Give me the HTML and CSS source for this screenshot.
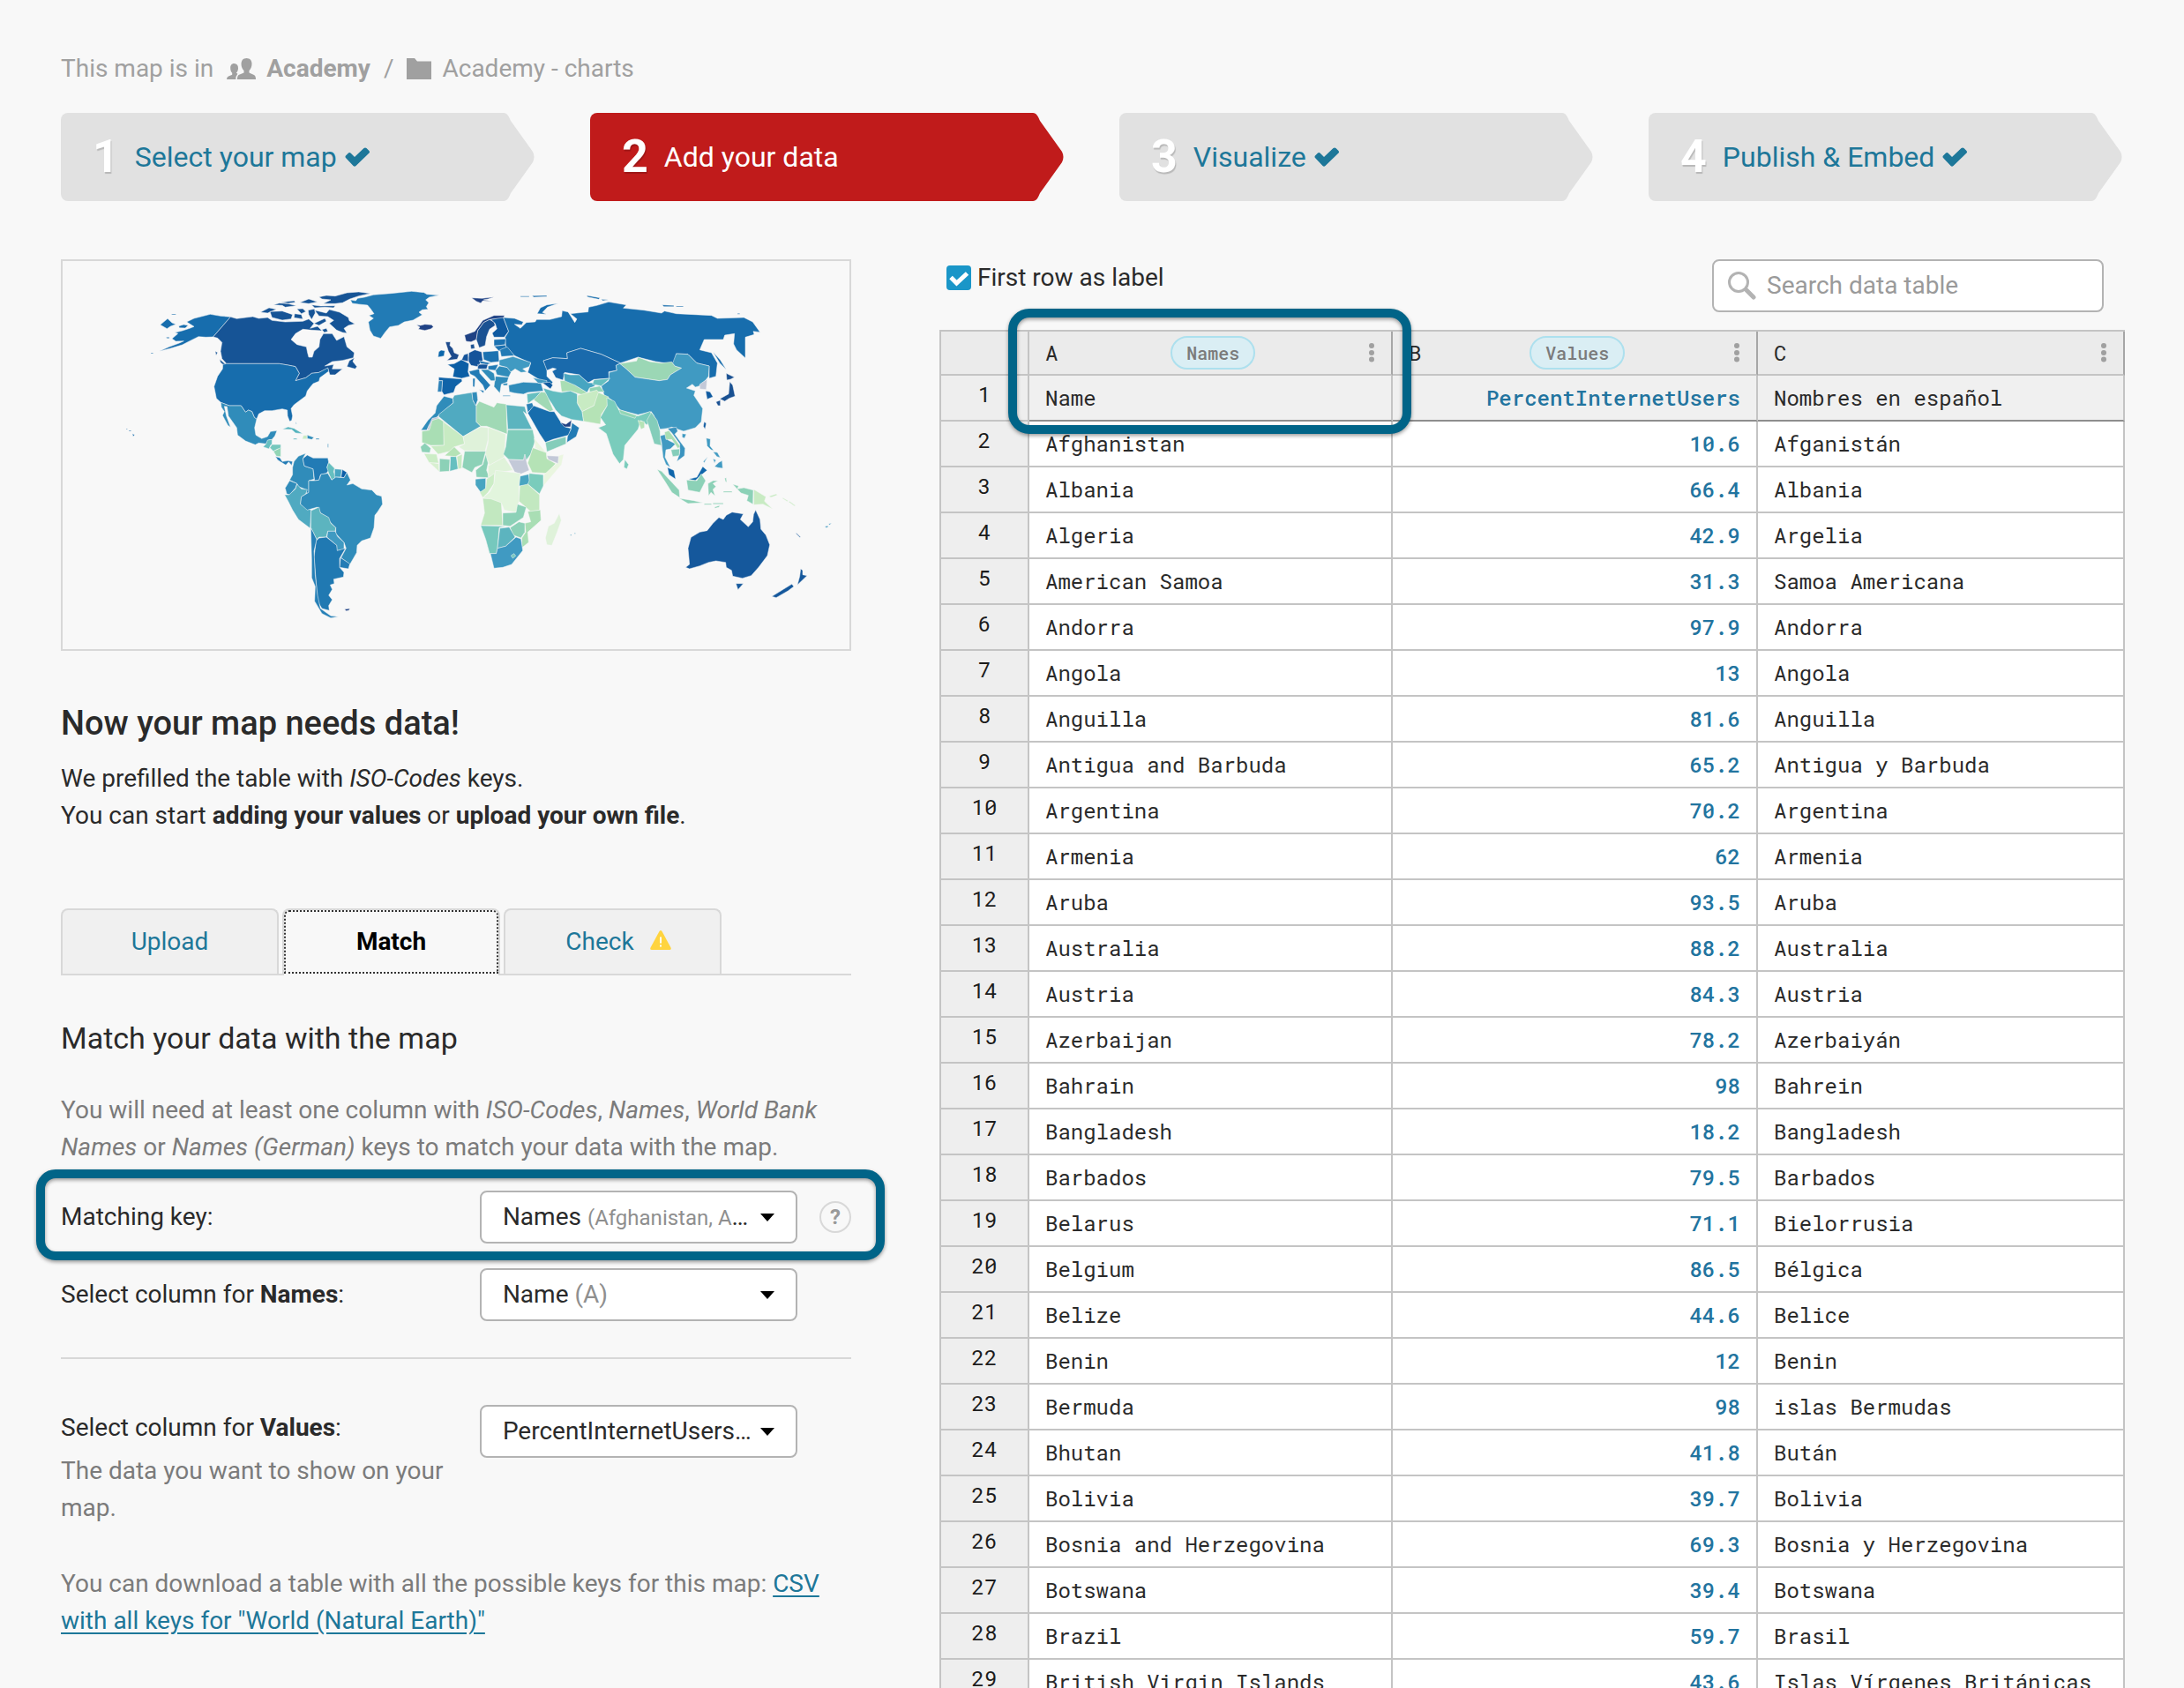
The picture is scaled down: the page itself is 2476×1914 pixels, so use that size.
FILE: index.html
```html
<!DOCTYPE html>
<html lang="en">
<head>
<meta charset="utf-8">
<meta name="viewport" content="width=device-width, initial-scale=1">
<title>Add your data</title>
<link rel="stylesheet" href="styles.css">
</head>
<body>
<svg class="sprite" aria-hidden="true">
  <symbol id="tip" viewBox="0 0 36 100"><path fill="currentColor" d="M0 0C4 0 6 4 8 9L33 44Q36 50 33 56L8 91C6 96 4 100 0 100Z"/></symbol>
  <symbol id="check" viewBox="0 0 28 22"><path fill="currentColor" d="M1 9.500L4 6.500Q5.500 5.500 7 7L11 11L21.500 1Q23 0 24.500 1L27.500 4Q28.500 5.500 27.500 6.500L12.500 21Q11 22.300 9.500 21L1 12Q0 10.700 1 9.500Z"/></symbol>
  <symbol id="kebab" viewBox="0 0 8 22"><g fill="currentColor"><circle cx="4" cy="3" r="3"/><circle cx="4" cy="11" r="3"/><circle cx="4" cy="18.500" r="3"/></g></symbol>
  <symbol id="caret" viewBox="0 0 16 9"><path fill="currentColor" d="M0 0H16L8 9Z"/></symbol>
</svg>
<div class="page">
  <nav class="crumbs" aria-label="Location">
    <span>This map is in</span>
    <a class="crumb crumb-team" href="#team">
      <svg class="icon-team" viewBox="0 0 33 24" aria-hidden="true"><path fill="currentColor" d="M22.500 0C18.500 0 16.500 2.800 16.500 6.500C16.500 10 18 12.500 19.500 14V16.500L13.500 19Q12 20 11.800 24H33Q33 20 31 19L25.500 16.500V14C27 12.500 28.500 10 28.500 6.500C28.500 2.800 26.500 0 22.500 0Z"/><path fill="currentColor" d="M8.500 6C5.500 6 4.200 8.200 4.200 11.200C4.200 13.500 5 15.500 6.200 16.700V18.800L2 20.500Q0 21.300 0 24H10.300Q10.300 20 12 18.500L12.300 17.500L10.800 16.700C12 15.500 13 13.500 13 11.200C13 8.200 11.500 6 8.500 6Z"/></svg>
      <strong>Academy</strong>
    </a>
    <span>/</span>
    <a class="crumb" href="#folder">
      <svg class="icon-folder" viewBox="0 0 28 24" aria-hidden="true"><path fill="currentColor" d="M0 0H9L12 3.500H28V24H0Z"/></svg>
      <span>Academy - charts</span>
    </a>
  </nav>

  <nav class="steps" aria-label="Steps">
    <a class="step" href="#map"><span class="step-body"><b class="step-no">1</b><span>Select your map <svg class="icon-check"><use href="#check"/></svg></span></span><svg class="step-tip"><use href="#tip"/></svg></a>
    <a class="step step-active" href="#data" aria-current="step"><span class="step-body"><b class="step-no">2</b><span>Add your data</span></span><svg class="step-tip"><use href="#tip"/></svg></a>
    <a class="step" href="#visualize"><span class="step-body"><b class="step-no">3</b><span>Visualize <svg class="icon-check"><use href="#check"/></svg></span></span><svg class="step-tip"><use href="#tip"/></svg></a>
    <a class="step" href="#publish"><span class="step-body"><b class="step-no">4</b><span>Publish &amp; Embed <svg class="icon-check"><use href="#check"/></svg></span></span><svg class="step-tip"><use href="#tip"/></svg></a>
  </nav>

  <div class="columns">
    <main class="setup">
      <div class="map">
        <svg viewBox="33 33 2676 1320" role="img" aria-label="World map of internet users">
          <g class="countries">
            <!-- Americas -->
            <path fill="#227bb5" d="M1012 165L1030 168 1036 160 1060 156 1090 148 1150 143 1220 136 1262 140 1272 146 1314 149 1280 156 1268 165 1278 175 1270 188 1276 197 1256 199 1245 207 1256 216 1225 234 1195 240 1175 252 1145 257 1130 275 1115 296 1090 288 1078 268 1073 240 1090 228 1075 218 1092 212 1080 195 1070 183 1040 180 1018 177Z"/>
            <path fill="#176dad" d="M604 223L545 291 520 292 495 290 465 305 440 318 400 330 362 340 395 325 430 312 445 305 418 306 405 297 425 280 415 276 440 270 465 262 480 256 455 240 480 228 535 214 570 220ZM428 254L445 249 460 252 450 261 430 260ZM365 250L390 229 405 243 418 248 400 255 388 263ZM404 213h14v3h-14ZM386 292l10 0 0 4-9 0ZM333 345h8v3h-8Z"/>
            <path fill="#165496" d="M604 223L625 229 680 222 700 228 730 225 745 235 790 240 850 238 870 230 888 245 875 262 900 255 915 270 880 268 850 265 825 280 810 300 830 317 862 325 866 345 870 360 882 360 888 340 905 325 908 300 920 280 950 280 965 303 990 290 1000 325 1025 345 1022 362 985 371 950 375 925 390 955 385 950 400 985 400 960 420 942 420 935 398 905 412 880 415 860 430 825 440 838 415 825 392 800 387 770 382 590 382 575 365 570 340 575 310 560 295 545 291Z"/>
            <path fill="#165496" d="M1000 392L1008 372 1025 362 1020 375 1034 392 1028 400ZM738 205L780 203 815 215 810 230 780 234 745 225ZM706 207L735 192 760 197 730 210ZM905 155L930 150 960 152 1000 141 1040 138 1080 143 1040 152 1010 162 985 175 960 178 920 178 945 165 915 162ZM750 182L770 176 800 178 828 185 790 190 780 184ZM775 174L800 170 820 168 825 173 800 177ZM840 174L870 162 900 172 870 178ZM830 196L850 195 860 205 845 212ZM880 182L910 186 960 185 955 192 925 190 890 192ZM868 200L890 196 892 210 880 232 870 215ZM822 212L845 215 850 230 820 226ZM890 200L930 210 940 198 975 207 1005 225 1008 236 1027 247 1005 252 990 262 1000 278 985 276 965 268 940 245 955 235 935 222 905 220ZM888 245L925 228 930 238 905 252ZM915 266l15-4 5 10-12 4ZM567 367L592 388 585 390 570 378ZM552 340l8 4-5 10Z"/>
            <path fill="#176dad" d="M578 385L590 382 770 382 800 387 825 392 838 415 825 440 860 430 880 415 905 412 935 396 938 408 908 430 905 442 885 450 875 462 865 475 860 492 820 522 810 535 815 560 812 575 805 578 798 560 797 540 780 536 745 542 720 542 700 553 693 571 685 565 677 545 665 540 655 547 640 525 600 525 571 514 556 500 548 460 560 425 577 400ZM270 620l8 4-5 6ZM258 609h8v3h-8ZM249 603h4v3h-4Z"/>
            <path fill="#308cba" d="M571 514L600 525 640 525 655 547 665 540 677 545 685 565 693 571 686 600 690 625 710 637 730 630 740 613 762 610 755 628 745 640 733 642 725 655 700 652 688 658 655 645 628 625 625 600 597 560 592 528 583 527 590 560 604 598 595 592 577 558 583 545 573 530Z"/>
            <path fill="#66bfc0" d="M715 665L725 655 730 642 745 640 745 655 740 660 735 672Z"/>
            <path fill="#76c8bd" d="M738 668L745 657 775 657 775 672 765 672 750 680Z"/>
            <path fill="#92d5b5" d="M750 680L775 668 775 698 760 697Z"/>
            <path fill="#227bb5" d="M757 698L772 702 780 715 800 712 815 715 812 728 802 716 792 727 765 710Z"/>
            <path fill="#56b4be" d="M780 605L800 597 820 602 850 620 825 618 812 606ZM818 636h12v4h-12Z"/>
            <path fill="#c8ebc3" d="M852 626l12 0 0 12-16 0Z"/>
            <path fill="#308cba" d="M865 625L888 633 880 640 865 637ZM894 636h12v4h-12ZM826 580l3 8-4-2ZM934 655h3v12h-3Z"/>
            <path fill="#308cba" d="M815 735L820 715 835 697 860 687 850 705 855 730 885 740 888 775 870 780 870 822 862 822 860 810 835 800 830 790 805 778 815 760Z"/>
            <path fill="#227bb5" d="M850 705L865 693 885 703 935 703 938 718 932 735 938 745 930 755 910 760 905 778 890 780 885 740 855 730Z"/>
            <path fill="#66bfc0" d="M938 718L958 738 955 750 962 768 948 778 938 755 932 735Z"/>
            <path fill="#48a5c1" d="M958 740L982 742 980 768 958 768Z"/>
            <path fill="#0b5ea8" d="M984 742L1000 752 990 770 980 768Z"/>
            <path fill="#308cba" d="M805 780L830 790 825 805 805 828 795 825 790 805Z"/>
            <path fill="#50aac1" d="M830 792L845 808 865 810 860 825 845 835 842 860 865 875 878 880 875 942 835 912 815 880 800 850 788 828 803 828 825 808Z"/>
            <path fill="#308cba" d="M870 780L890 780 905 778 912 758 935 755 948 778 962 768 990 770 1000 752 1012 778 1000 795 1020 790 1050 808 1085 812 1100 828 1118 833 1121 860 1105 885 1095 898 1092 940 1080 975 1050 985 1035 1000 1033 1025 1010 1065 980 1042 997 1010 990 990 962 960 962 940 940 918 935 905 910 890 900 870 865 880 842 860 845 835 870 820Z"/>
            <path fill="#5cb4bf" d="M878 882L905 870 910 890 938 905 945 925 962 940 960 952 935 952 930 972 905 972 897 980 885 955 877 940Z"/>
            <path fill="#409ac2" d="M935 952L960 952 968 970 990 990 990 1015 965 1018 965 1000 932 972Z"/>
            <path fill="#227bb5" d="M978 1042L1010 1063 1005 1080 975 1075Z"/>
            <path fill="#2079b2" d="M905 975L930 972 965 1000 967 1018 995 1010 975 1045 975 1075 990 1092 988 1108 955 1115 957 1130 943 1135 950 1150 938 1170 950 1185 938 1205 940 1222 915 1215 900 1190 893 1100 888 1040 895 985Z"/>
            <path fill="#2680b7" d="M877 940L885 955 897 980 888 1020 892 1100 900 1170 910 1215 945 1240 971 1243 945 1247 915 1232 890 1190 892 1140 880 1110 880 1050Z"/>
            <path fill="#1f4285" d="M992 1217l18-2-3 6-10 2ZM1236 250L1250 252 1265 248 1288 250 1294 257 1285 264 1265 269 1243 265 1248 258Z"/>
          </g>
          <g class="countries" transform="translate(1200 0)">
            <!-- Europe -->
            <path fill="#1f4285" d="M224 158L260 160 300 155 280 162 265 165 295 170 262 168 255 176 240 170ZM200 285L235 272 262 235 300 218 336 218 332 228 300 230 285 232 265 242 245 270 240 300 222 308 205 306Z"/>
            <path fill="#1d4b8c" d="M135 308L152 308 150 320 160 330 165 345 181 352 175 367 140 371 155 358 145 340Z"/>
            <path fill="#0b66ab" d="M112 342L120 336 133 338 130 356 110 360Z"/>
            <path fill="#1a5192" d="M265 242L285 232 300 240 304 252 285 265 275 290 270 320 250 328 240 300 245 270ZM220 318L232 315 235 330 222 332Z"/>
            <path fill="#0f5aa0" d="M290 232L332 225 350 272 335 292 300 292 294 278 310 264 304 245Z"/>
            <path fill="#176dad" d="M332 225L370 228 400 240 395 250 370 248 390 262 410 242 440 240 445 232 490 232 530 222 532 202 552 206 575 242 582 230 560 212 600 208 620 206 622 190 650 184 690 172 750 182 740 193 810 200 870 210 880 203 920 212 1040 218 1060 228 1150 225 1180 240 1205 275 1182 272 1185 283 1155 292 1155 363 1125 335 1115 315 1118 280 1085 285 1080 300 1015 300 1000 335 1040 345 1060 380 1055 425 1032 432 1032 390 990 380 960 350 920 348 915 385 850 375 790 360 730 380 665 350 595 330 548 345 550 365 500 362 468 372 480 400 480 425 500 445 490 462 460 440 415 412 425 380 370 355 340 325 338 292 350 272ZM447 212L458 192 480 182 518 177 482 190 465 208 478 214ZM1045 342L1070 370 1090 402 1068 380ZM616 150l45 8-5 5-38-8ZM665 163l25 2-20 3ZM872 182l40 2 0 4-34 0ZM920 186h24v3h-24ZM390 152h30v3h-30ZM430 151l50-1 0 4-45 2ZM1128 211h8v3h-8Z"/>
            <path fill="#0b5ea5" d="M142 385L165 382 190 368 215 382 212 410 218 425 190 432 160 427 165 400Z"/>
            <path fill="#1063a8" d="M112 428L190 434 192 442 170 460 163 480 130 488 122 475 125 440 112 440Z"/>
            <path fill="#2a80b8" d="M112 440L125 440 122 478 108 478Z"/>
            <path fill="#15549a" d="M215 345L235 335 258 342 262 370 245 392 222 388 212 372ZM190 370L198 352 212 347 214 375 200 372ZM245 385L280 383 275 400 245 400Z"/>
            <path fill="#1b71b0" d="M262 342L315 338 318 375 290 378 265 368ZM300 300L340 298 338 318 300 322ZM300 322L338 318 345 332 318 340ZM250 372L290 380 278 385 255 382Z"/>
            <path fill="#227bb5" d="M320 335L345 325 370 355 325 358Z"/>
            <path fill="#409ac2" d="M318 370L365 358 425 378 420 392 398 400 412 410 392 412 372 400 355 412 345 395 318 388Z"/>
            <path fill="#227bb5" d="M215 408L250 400 252 415 288 455 270 475 262 455 235 425 220 418ZM228 432l8 0-2 30-6-2ZM250 470l16 4-2 8ZM280 390L315 385 305 405 280 402Z"/>
            <path fill="#308cba" d="M255 402L280 402 300 415 305 440 290 440ZM305 405L318 390 345 395 358 412 350 428 310 420ZM305 425L350 428 345 445 325 452 320 482 300 460ZM330 490h25v3h-25Z"/>
            <!-- Asia -->
            <path fill="#308cba" d="M350 455L375 450 400 445 460 448 468 475 415 480 400 486 370 482 352 478ZM330 450l16-2 0 8-14 0Z"/>
            <path fill="#409ac2" d="M432 430L480 440 480 450 450 448Z"/>
            <path fill="#0f5aa0" d="M465 447L490 445 500 455 492 468Z"/>
            <path fill="#1a6aac" d="M468 372L500 362 550 365 548 345 595 330 665 350 730 380 715 388 718 405 690 410 692 432 640 436 620 447 590 420 540 412 535 438 510 430 498 408 512 400 500 397 480 405Z"/>
            <path fill="#9bd7b5" d="M728 382L785 373 790 360 830 375 870 380 905 376 915 390 938 397 900 420 890 436 862 440 780 428 750 400Z"/>
            <path fill="#409ac2" d="M728 382L750 400 780 428 862 440 890 436 900 420 938 397 915 390 908 380 920 348 960 350 990 380 1032 390 1030 425 1020 438 998 458 985 462 975 452 955 465 985 475 980 490 1010 535 1005 580 985 600 945 612 905 598 890 602 865 605 850 570 835 545 790 556 730 540 700 505 675 490 665 458 690 440 692 412 718 405 715 388ZM940 620l14 2-6 14-8-4Z"/>
            <path fill="#c3c9d8" d="M1000 452L1025 435 1022 470 1000 468Z"/>
            <path fill="#0f5aa0" d="M1020 475L1035 478 1045 495 1025 503ZM1015 580L1022 585 1018 605 1012 595Z"/>
            <path fill="#1a5192" d="M1090 415L1118 428 1105 435 1092 438ZM1102 443L1112 455 1120 493 1100 500 1085 510 1068 502 1098 485ZM1055 512L1070 506 1070 525 1062 525Z"/>
            <path fill="#a9deb4" d="M525 440L555 440 575 455 617 480 605 490 560 475 530 478Z"/>
            <path fill="#48a5c1" d="M537 415L560 420 590 420 620 447 650 448 640 460 625 465 617 480 575 455 540 440Z"/>
            <path fill="#66bfc0" d="M640 437L695 432 665 458 635 452Z"/>
            <path fill="#92d5b5" d="M625 465L660 458 675 478 625 478Z"/>
            <path fill="#62bcc0" d="M468 465L500 475 530 480 560 475 583 485 585 520 600 545 605 578 565 572 530 560 510 540 495 515 480 495Z"/>
            <path fill="#a0d9b5" d="M435 505L460 478 475 480 485 500 502 540 490 545Z"/>
            <path fill="#66bfc0" d="M412 485L460 478 440 500 415 518Z"/>
            <path fill="#2a80b8" d="M410 520L430 515 435 528 415 548Z"/>
            <path fill="#176dad" d="M415 550L435 525 490 545 505 545 528 582 545 598 562 602 555 625 500 640 475 650 455 620Z"/>
            <path fill="#227bb5" d="M565 583L590 600 580 630 548 650 550 630 562 605Z"/>
            <path fill="#1f4285" d="M526 582L545 588 564 574 560 597 540 597Z"/>
            <path fill="#84cdba" d="M475 650L545 630 545 655 480 682Z"/>
            <path fill="#c8ebc3" d="M585 490L650 472 660 485 640 525 600 545 583 515Z"/>
            <path fill="#b5e3b6" d="M600 545L640 525 655 480 690 495 685 525 665 555 662 588 605 578Z"/>
            <path fill="#7accbc" d="M684 498L710 510 725 540 790 560 830 545 845 558 820 590 800 575 790 605 745 660 740 708 727 722 705 690 682 620 655 600 680 590 662 565 685 525Z"/>
            <path fill="#92d5b5" d="M725 538L785 558 780 568 730 552Z"/>
            <path fill="#b5e3b6" d="M790 575L812 580 812 600 800 605Z"/>
            <path fill="#7accbc" d="M745 708L758 725 752 740 742 735Z"/>
            <path fill="#84cdba" d="M835 548L855 575 865 612 866 640 878 700 868 660 845 655 828 600 820 575Z"/>
            <path fill="#409ac2" d="M865 628L885 622 892 642 918 655 900 672 885 675 882 700 900 735 885 725 875 700 870 650Z"/>
            <path fill="#a9deb4" d="M880 615L895 610 935 665 925 670 905 640 885 640Z"/>
            <path fill="#3a93bf" d="M890 602L920 598 925 612 915 622 950 670 948 695 922 715 932 685 932 655 905 618Z"/>
            <path fill="#84cdba" d="M902 675L932 672 930 695 908 698Z"/>
            <path fill="#0f66ab" d="M890 735L912 745 918 775 895 760ZM962 775L990 768 1010 732 1025 745 1000 765 985 780Z"/>
            <path fill="#8cd1b7" d="M955 778L990 780 1005 757 1020 780 1000 820 960 812ZM855 742L870 748 895 775 930 812 932 838 905 820 880 780ZM930 840L980 848 1010 855 960 858ZM1015 858h25v4h-25ZM1045 856h35v4h-35ZM1050 870l18-6-2 6-14 4ZM1028 790L1045 780 1062 780 1045 790 1055 800 1045 810 1052 832 1038 820 1030 832ZM1112 792L1132 798 1128 808 1150 804 1182 812 1181 860 1160 848 1165 830 1140 822ZM1085 772l5-2 2 16-5-4ZM1080 816h30v4h-30Z"/>
            <path fill="#c8ebc3" d="M1184 810L1225 835 1220 850 1247 876 1215 860 1184 862ZM1235 833l25-8 4 4-22 8ZM1282 838l18 10-2 3-16-10ZM1305 850l20 14-2 3-20-14Z"/>
            <path fill="#409ac2" d="M1022 635L1036 638 1035 662 1048 678 1038 675 1025 662ZM1045 682l15 2 10 18-12-4ZM1050 732L1065 718 1076 712 1078 738 1062 736ZM1012 715l15-16-12 20ZM1045 705l10 5-5 10Z"/>
            <!-- Oceania -->
            <path fill="#15589c" d="M970 973L1000 955 1025 950 1045 925 1065 905 1080 912 1090 898 1110 887 1148 893 1138 912 1165 937 1180 920 1183 895 1190 880 1205 912 1208 945 1225 965 1238 998 1230 1035 1200 1075 1175 1103 1145 1112 1112 1105 1108 1085 1090 1075 1088 1058 1055 1053 1030 1058 1000 1070 965 1080 952 1075 965 1065 960 1010ZM1123 1130L1148 1130 1130 1151ZM1343 1080L1350 1085 1350 1100 1365 1103 1332 1135 1340 1105ZM1313 1132L1320 1140 1300 1155 1260 1178 1245 1174ZM1328 958l15 14-3 1-12-12Z"/>
            <path fill="#409ac2" d="M1426 936l10-3 0 6-8 1ZM1438 927l10-2-6 6ZM573 958h4v3h-4ZM560 963h4v4h-4Z"/>
            <!-- Africa -->
            <path fill="#308cba" d="M105 525L130 493 160 500 162 515 115 555 80 590 72 608 52 608 75 575 100 550Z"/>
            <path fill="#c3c9d8" d="M72 608L80 590 90 568 112 563 110 572 92 576 80 608Z"/>
            <path fill="#50aac1" d="M112 555L162 515 160 500 165 490 225 480 230 510 240 525 240 580 255 595 195 630 112 562Z"/>
            <path fill="#308cba" d="M225 480L242 478 245 505 238 525 228 505Z"/>
            <path fill="#a0d9b5" d="M240 525L250 510 300 530 310 515 342 520 345 622 275 595 255 595 240 580Z"/>
            <path fill="#5cb4bf" d="M342 522L405 528 412 555 400 545 430 605 347 605Z"/>
            <path fill="#a9deb4" d="M55 612L80 608 90 575 112 568 130 580 130 660 85 660 70 655 55 650Z"/>
            <path fill="#c8ebc3" d="M128 580L195 630 200 655 165 665 150 680 110 690 85 662 130 660Z"/>
            <path fill="#dff2da" d="M195 630L255 597 280 600 280 640 270 680 200 678 180 665 200 655Z"/>
            <path fill="#e0f3da" d="M280 598L340 622 335 700 285 728 270 690 280 650Z"/>
            <path fill="#80cdbb" d="M347 607L432 607 440 645 425 690 410 710 350 708 332 690 340 665Z"/>
            <path fill="#eaf6e0" d="M437 635L480 688 440 668Z"/>
            <path fill="#c3c9d8" d="M348 708L400 710 405 690 412 720 420 745 390 758 370 750Z"/>
            <path fill="#b5e3b6" d="M432 668L478 685 480 705 510 722 480 755 430 752 415 720Z"/>
            <path fill="#eaf6e0" d="M520 695L537 690 530 725 468 798 470 760 512 722Z"/>
            <path fill="#c3c9d8" d="M480 695L520 697 518 722 485 708Z"/>
            <path fill="#7accbc" d="M420 755L468 760 468 798 455 825 415 792Z"/>
            <path fill="#48a5c1" d="M388 765L418 758 420 780 413 798 385 798Z"/>
            <path fill="#8cd1b7" d="M50 665L65 652 85 670 82 685 55 683Z"/>
            <path fill="#ccedc6" d="M62 688L105 690 112 720 80 720Z"/>
            <path fill="#d8f0d0" d="M80 718L112 722 114 750Z"/>
            <path fill="#8cd1b7" d="M115 705L150 708 148 748 115 750Z"/>
            <path fill="#66bfc0" d="M152 698L172 698 178 740 150 748Z"/>
            <path fill="#b5e3b6" d="M132 695L165 665 188 688 170 698Z"/>
            <path fill="#c8ebc3" d="M174 698L192 690 190 738 178 740Z"/>
            <path fill="#8cd1b7" d="M200 680L272 680 260 725 235 735 225 752 192 735Z"/>
            <path fill="#8cd1b7" d="M272 690L280 720 275 745 285 770 240 768 238 745 262 725Z"/>
            <path fill="#e0f3da" d="M280 730L335 700 365 745 330 750 280 768Z"/>
            <path fill="#48a5c1" d="M237 775L272 772 272 808 255 820 237 795Z"/>
            <path fill="#ccedc6" d="M252 820L272 806 275 775 302 755 300 790 280 820 262 838Z"/>
            <path fill="#e2f5dd" d="M305 745L390 755 385 800 385 850 375 888 335 880 325 855 262 838 285 820 300 790Z"/>
            <path fill="#c2e8c0" d="M388 798L415 792 455 828 455 880 425 885 385 850Z"/>
            <path fill="#c2e8c0" d="M262 840L290 842 325 855 330 932 255 932 268 890Z"/>
            <path fill="#8cd1b7" d="M330 890L375 888 380 860 410 870 400 905 355 935 330 932Z"/>
            <path fill="#a9deb4" d="M415 885L458 880 460 915 415 955 418 990 395 1008 395 975 408 955 405 925 425 920Z"/>
            <path fill="#8cd1b7" d="M355 940L385 920 405 925 405 955 392 975 365 965Z"/>
            <path fill="#76c8bd" d="M255 933L340 935 318 940 312 1010 308 1028 285 1028 272 980Z"/>
            <path fill="#5cb4bf" d="M320 942L352 938 372 972 340 1003 312 1010Z"/>
            <path fill="#409ac2" d="M288 1028L308 1028 312 1010 340 1003 375 972 392 978 398 1018 360 1065 330 1075 300 1078Z"/>
            <path fill="#76c8bd" d="M358 1035L368 1028 374 1036 364 1044Z"/>
            <path fill="#dff2da" d="M522 892L529 915 515 955 497 1000 480 998 475 975 485 935 505 925Z"/>
          </g>
        </svg>
      </div>

      <h1 class="title">Now your map needs data!</h1>
      <p class="intro">We prefilled the table with <em>ISO-Codes</em> keys.<br>You can start <strong>adding your values</strong> or <strong>upload your own file</strong>.</p>

      <div class="tabs" role="tablist">
        <button class="tab" type="button" role="tab" aria-selected="false">Upload</button>
        <button class="tab tab-active" type="button" role="tab" aria-selected="true">Match</button>
        <button class="tab tab-warn" type="button" role="tab" aria-selected="false">Check <svg class="icon-warn" viewBox="0 0 24 22" aria-hidden="true"><path fill="#ffd43f" d="M10.500 1Q12 -1 13.500 1L23.500 19.500Q24.500 22 22 22H2Q-.5 22 .5 19.500Z"/><path stroke="#fff" stroke-width="2" d="M12 7.500V14.500M12 16.500V18.500"/></svg></button>
      </div>

      <h2 class="subtitle">Match your data with the map</h2>
      <p class="note match-note">You will need at least one column with <em>ISO-Codes</em>, <em>Names</em>, <em>World Bank Names</em> or <em>Names (German)</em> keys to match your data with the map.</p>

      <div class="field field-marked">
        <label class="field-label" for="key">Matching key:</label>
        <div class="dropdown">
          <select id="key"><option>Names</option><option>ISO-Codes</option><option>World Bank Names</option></select>
          <span class="hint"><span class="hint-small">(Afghanistan, A</span>…</span>
          <svg class="icon-caret"><use href="#caret"/></svg>
        </div>
        <button class="help" type="button" aria-label="Help">?</button>
      </div>
      <div class="field">
        <label class="field-label" for="col-names">Select column for <strong>Names</strong>:</label>
        <div class="dropdown">
          <select id="col-names"><option>Name</option><option>PercentInternetUsers</option></select>
          <span class="hint"><span>(A)</span></span>
          <svg class="icon-caret"><use href="#caret"/></svg>
        </div>
      </div>
      <hr class="rule">
      <div class="field field-top">
        <div class="field-text">
          <label for="col-values">Select column for <strong>Values</strong>:</label>
          <p class="note">The data you want to show on your map.</p>
        </div>
        <div class="dropdown">
          <select id="col-values" class="grow"><option>PercentInternetUsers…</option><option>Name</option></select>
          <svg class="icon-caret"><use href="#caret"/></svg>
        </div>
      </div>
      <p class="note download">You can download a table with all the possible keys for this map: <a href="#csv">CSV with all keys for "World (Natural Earth)"</a></p>
    </main>

    <section class="data">
      <div class="toolbar">
        <label class="first-row"><input type="checkbox" checked> First row as label</label>
        <div class="search">
          <svg class="icon-search" viewBox="0 0 32 32" aria-hidden="true"><circle cx="12" cy="12" r="10.500" fill="none" stroke="#b3b3b3" stroke-width="3"/><path stroke="#b3b3b3" stroke-width="5" stroke-linecap="round" d="M21 21L29 29"/></svg>
          <input type="search" placeholder="Search data table" aria-label="Search data table">
        </div>
      </div>
      <div class="sheet">
        <table>
          <colgroup><col class="col-index"><col class="col-a"><col class="col-b"><col></colgroup>
          <thead>
            <tr>
              <th></th>
              <th><div class="head"><span>A</span><span class="badge">Names</span><button class="kebab" type="button" aria-label="Column A menu"><svg><use href="#kebab"/></svg></button></div></th>
              <th><div class="head"><span>B</span><span class="badge">Values</span><button class="kebab" type="button" aria-label="Column B menu"><svg><use href="#kebab"/></svg></button></div></th>
              <th><div class="head"><span>C</span><span></span><button class="kebab" type="button" aria-label="Column C menu"><svg><use href="#kebab"/></svg></button></div></th>
            </tr>
          </thead>
          <tbody>
            <tr class="label-row"><th>1</th><td>Name</td><td>PercentInternetUsers</td><td>Nombres en español</td></tr>
            <tr><th>2</th><td>Afghanistan</td><td>10.6</td><td>Afganistán</td></tr>
            <tr><th>3</th><td>Albania</td><td>66.4</td><td>Albania</td></tr>
            <tr><th>4</th><td>Algeria</td><td>42.9</td><td>Argelia</td></tr>
            <tr><th>5</th><td>American Samoa</td><td>31.3</td><td>Samoa Americana</td></tr>
            <tr><th>6</th><td>Andorra</td><td>97.9</td><td>Andorra</td></tr>
            <tr><th>7</th><td>Angola</td><td>13</td><td>Angola</td></tr>
            <tr><th>8</th><td>Anguilla</td><td>81.6</td><td>Anguilla</td></tr>
            <tr><th>9</th><td>Antigua and Barbuda</td><td>65.2</td><td>Antigua y Barbuda</td></tr>
            <tr><th>10</th><td>Argentina</td><td>70.2</td><td>Argentina</td></tr>
            <tr><th>11</th><td>Armenia</td><td>62</td><td>Armenia</td></tr>
            <tr><th>12</th><td>Aruba</td><td>93.5</td><td>Aruba</td></tr>
            <tr><th>13</th><td>Australia</td><td>88.2</td><td>Australia</td></tr>
            <tr><th>14</th><td>Austria</td><td>84.3</td><td>Austria</td></tr>
            <tr><th>15</th><td>Azerbaijan</td><td>78.2</td><td>Azerbaiyán</td></tr>
            <tr><th>16</th><td>Bahrain</td><td>98</td><td>Bahrein</td></tr>
            <tr><th>17</th><td>Bangladesh</td><td>18.2</td><td>Bangladesh</td></tr>
            <tr><th>18</th><td>Barbados</td><td>79.5</td><td>Barbados</td></tr>
            <tr><th>19</th><td>Belarus</td><td>71.1</td><td>Bielorrusia</td></tr>
            <tr><th>20</th><td>Belgium</td><td>86.5</td><td>Bélgica</td></tr>
            <tr><th>21</th><td>Belize</td><td>44.6</td><td>Belice</td></tr>
            <tr><th>22</th><td>Benin</td><td>12</td><td>Benin</td></tr>
            <tr><th>23</th><td>Bermuda</td><td>98</td><td>islas Bermudas</td></tr>
            <tr><th>24</th><td>Bhutan</td><td>41.8</td><td>Bután</td></tr>
            <tr><th>25</th><td>Bolivia</td><td>39.7</td><td>Bolivia</td></tr>
            <tr><th>26</th><td>Bosnia and Herzegovina</td><td>69.3</td><td>Bosnia y Herzegovina</td></tr>
            <tr><th>27</th><td>Botswana</td><td>39.4</td><td>Botswana</td></tr>
            <tr><th>28</th><td>Brazil</td><td>59.7</td><td>Brasil</td></tr>
            <tr><th>29</th><td>British Virgin Islands</td><td>43.6</td><td>Islas Vírgenes Británicas</td></tr>
          </tbody>
        </table>
        <div class="marker"></div>
      </div>
    </section>
  </div>
</div>
</body>
</html>
```
FILE: styles.css
```css
* {
  box-sizing: border-box;
}

body {
  margin: 0;
  background: #f8f8f8;
  color: #2a2a2a;
  font: 28px/42px Roboto, "Liberation Sans", sans-serif;
}

h1, h2, p {
  margin: 0;
}

a {
  color: #1d7799;
}

button, input, select {
  font: inherit;
  color: inherit;
}

strong {
  font-weight: 700;
}

.sprite {
  display: none;
}

.page {
  height: 100vh;
  overflow: hidden;
  padding: 57px 67px 0 69px;
}

/* Breadcrumb */
.crumbs {
  display: flex;
  align-items: center;
  gap: 15px;
  color: #a0a0a0;
}

.crumb {
  display: flex;
  align-items: center;
  gap: 12px;
  color: inherit;
  text-decoration: none;
}

.icon-team {
  width: 33px;
  height: 24px;
}

.icon-folder {
  width: 28px;
  height: 24px;
}

/* Steps */
.steps {
  display: grid;
  grid-template-columns: repeat(4, 1fr);
  gap: 62px;
  margin-top: 29px;
  padding-right: 2px;
}

.step {
  display: flex;
  height: 100px;
  color: #e1e1e1;
  text-decoration: none;
}

.step-body {
  flex: 1;
  display: flex;
  align-items: center;
  gap: 18px;
  padding-left: 36px;
  border-radius: 8px 0 0 8px;
  background: #e1e1e1;
  color: #1d7799;
  font-size: 32px;
}

.step-active {
  color: #c01b1b;
}

.step-active .step-body {
  background: #c01b1b;
  color: #fff;
}

.step-no {
  color: #fff;
  font-size: 52px;
  text-shadow: 1px 2px 1px rgba(0, 0, 0, 0.18);
}

.step-tip {
  width: 36px;
  height: 100px;
}

.icon-check {
  width: 28px;
  height: 22px;
  margin-left: 1px;
}

/* Columns */
.columns {
  display: grid;
  grid-template-columns: 2fr 3fr;
  gap: 100px;
  margin-top: 66px;
}

.map {
  border: 2px solid #d8d8d8;
}

.map svg {
  display: block;
  width: 100%;
}

.countries path {
  stroke: #f8f8f8;
  stroke-opacity: 0.5;
  stroke-width: 3;
  stroke-linejoin: round;
}

.title {
  margin-top: 60px;
  font-size: 38px;
  line-height: 44px;
  font-weight: 500;
}

.intro {
  margin-top: 20px;
}

/* Tabs */
.tabs {
  display: flex;
  gap: 4px;
  margin-top: 84px;
  border-bottom: 2px solid #d8d8d8;
}

.tab {
  width: 247px;
  height: 74px;
  padding: 0;
  border: 2px solid #d8d8d8;
  border-bottom: 0;
  border-radius: 8px 8px 0 0;
  background: #f0f0f0;
  color: #1d7799;
}

.tab-active {
  height: 76px;
  margin-bottom: -2px;
  padding-bottom: 2px;
  background: #f8f8f8;
  color: #000;
  font-weight: 700;
  outline: 2px dotted #333;
  outline-offset: -4px;
}

.tab-warn {
  padding-left: 13px;
}

.icon-warn {
  width: 24px;
  height: 22px;
  margin-left: 11px;
}

.subtitle {
  margin-top: 49px;
  font-size: 34px;
  line-height: 44px;
  font-weight: 400;
}

.note {
  color: #7b7b7b;
}

.match-note {
  margin-top: 39px;
}

/* Form rows */
.field {
  position: relative;
  display: grid;
  grid-template-columns: 53% 360px 1fr;
  align-items: center;
  margin-top: 28px;
}

.field-marked::after {
  content: "";
  position: absolute;
  inset: -24px -38px -19px -28px;
  border: 10px solid #006488;
  border-radius: 22px;
  filter: drop-shadow(0 2px 2px rgba(0, 0, 0, 0.4));
  pointer-events: none;
}

.field-top {
  align-items: start;
  margin-top: 52px;
}

.field-text {
  padding: 5px 30px 0 0;
}

.field-text .note {
  margin-top: 7px;
}

.dropdown {
  display: flex;
  align-items: center;
  height: 60px;
  padding: 0 24px;
  border: 2px solid #b3b3b3;
  border-radius: 8px;
  background: #fff;
}

.dropdown select {
  appearance: none;
  field-sizing: content;
  padding: 0;
  border: 0;
  background: none;
}

.dropdown .grow {
  flex: 1;
  min-width: 0;
}

.hint {
  flex: 1;
  padding-left: 7px;
  white-space: nowrap;
}

.hint span {
  color: #8f8f8f;
}

.hint-small {
  font-size: 24px;
}

.icon-caret {
  width: 16px;
  height: 9px;
  color: #000;
}

.help {
  justify-self: end;
  width: 36px;
  height: 36px;
  padding: 0;
  border: 2px solid #d8d8d8;
  border-radius: 50%;
  background: none;
  color: #999;
  font-size: 24px;
  line-height: 30px;
  font-weight: 700;
}

.rule {
  margin: 41px 0 0;
  border: 0;
  border-top: 2px solid #d8d8d8;
}

.download {
  margin-top: 44px;
}

.download a {
  text-underline-offset: 4px;
}

/* Data table */
.toolbar {
  display: flex;
  justify-content: space-between;
  align-items: flex-start;
  padding: 0 24px 0 8px;
}

.first-row {
  display: flex;
  align-items: center;
  gap: 7px;
}

.first-row input {
  appearance: none;
  width: 28px;
  height: 28px;
  margin: 0;
  border-radius: 4px;
  background: #1a96c8 url("data:image/svg+xml,%3Csvg xmlns='http://www.w3.org/2000/svg' viewBox='0 0 28 28'%3E%3Cpath fill='none' stroke='%23fff' stroke-width='5' d='M5 13.500L11.500 20L23.500 9'/%3E%3C/svg%3E");
}

.search {
  display: flex;
  align-items: center;
  gap: 12px;
  width: 444px;
  height: 60px;
  padding: 0 16px;
  border: 2px solid #b3b3b3;
  border-radius: 8px;
  background: #fff;
}

.search input {
  flex: 1;
  min-width: 0;
  padding: 0;
  border: 0;
  background: none;
  outline: 0;
}

.search input::placeholder {
  color: #9a9a9a;
}

.icon-search {
  width: 32px;
  height: 32px;
}

.sheet {
  position: relative;
  margin-top: 20px;
  font: 24px/30px "Roboto Mono", "Liberation Mono", monospace;
}

table {
  width: 100%;
  table-layout: fixed;
  border-collapse: separate;
  border-spacing: 0;
  border: 2px solid #c4c4c4;
  border-width: 2px 0 0 2px;
}

.col-index {
  width: 100px;
}

.col-a {
  width: 412px;
}

.col-b {
  width: 414px;
}

th, td {
  padding: 10px 18px;
  border: 2px solid #c4c4c4;
  border-width: 0 2px 2px 0;
  background: #fff;
  font-weight: 400;
  text-align: left;
  white-space: nowrap;
}

tbody th {
  padding: 6px 18px 14px;
  background: #eee;
  color: #1c1c1c;
  text-align: center;
}

td:nth-child(3) {
  color: #22749f;
  font-weight: 500;
  text-align: right;
}

.label-row td {
  border-bottom-color: #8e8e8e;
  background: #f0f0f0;
}

thead th {
  padding: 0 18px;
  border-right-color: #a6a6a6;
  background: #ebebeb;
}

thead th:first-child {
  border-right-color: #c4c4c4;
}

.head {
  display: grid;
  grid-template-columns: auto 1fr auto;
  align-items: center;
  height: 48px;
}

.badge {
  justify-self: center;
  padding: 2px 16px;
  border: 2px solid #ade0ee;
  border-radius: 19px;
  background: #daeef4;
  color: #7b7b7b;
  font-size: 20px;
  font-weight: 500;
}

.kebab {
  display: flex;
  padding: 0;
  border: 0;
  background: none;
  color: #a0a0a0;
}

.kebab svg {
  width: 8px;
  height: 22px;
}

.marker {
  position: absolute;
  top: -24px;
  left: 78px;
  width: 457px;
  height: 142px;
  border: 10px solid #006488;
  border-radius: 24px;
  filter: drop-shadow(0 2px 2px rgba(0, 0, 0, 0.4));
  pointer-events: none;
}
```
